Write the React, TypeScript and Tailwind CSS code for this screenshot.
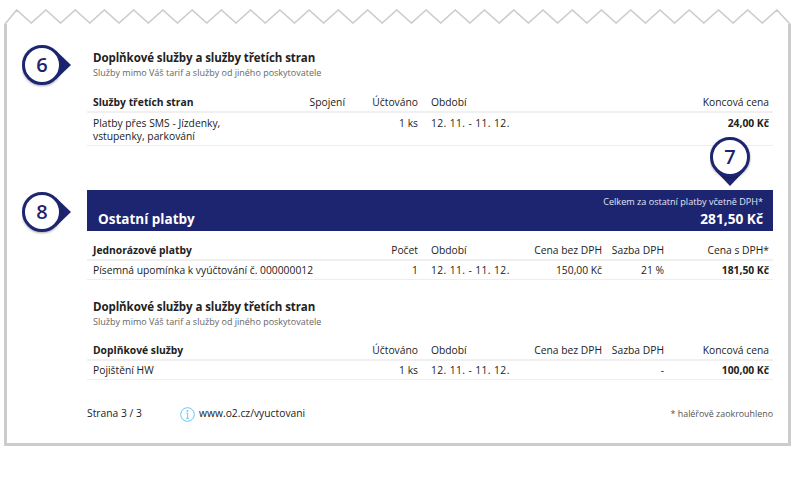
const rowGrid = 'grid grid-cols-[200px_52px_73px_102px_82px_62px_105px] pl-[6px] pr-[4px]';

// torn paper edge: peaks every ~29px
const zigzag = () => {
  const step = 29.24;
  let d = 'M1 15';
  for (let k = 0; k < 27; k++) {
    const peak = 12.7 + k * step;
    d += ` L${peak.toFixed(1)} 1`;
    if (k < 26) d += ` L${(peak + step / 2).toFixed(1)} 14`;
  }
  return d + ' L786 15';
};

const Badge = ({ n, dir, className }: { n: string; dir: 'right' | 'down'; className: string }) => (
  <div className={`absolute ${className}`}>
    <svg width="56" height="56" viewBox="0 0 56 56" className="block">
      <defs>
        <filter id={`shadow${n}`} x="-20%" y="-20%" width="140%" height="140%">
          <feDropShadow dx="0" dy="1" stdDeviation="0.8" floodColor="#000" floodOpacity="0.35" />
        </filter>
      </defs>
      {dir === 'right' ? (
        <path d="M33.8 5.5 L49 20 L33.8 34.5 Z" fill="#1d2570" />
      ) : (
        <path d="M5.5 33.8 L20 49 L34.5 33.8 Z" fill="#1d2570" />
      )}
      <circle cx="20" cy="20" r="18.5" fill="#fff" stroke="#1d2570" strokeWidth="3" filter={`url(#shadow${n})`} />
    </svg>
    <span className="absolute left-0 top-0 flex h-[40px] w-[40px] items-center justify-center text-[20px] font-semibold text-[#1d2570]">
      {n}
    </span>
  </div>
);

const Heading = () => (
  <div className="pl-[6px]">
    <h2 className="text-[11.5px] leading-[16px] font-bold tracking-[-0.08px] text-[#222]">
      Doplňkové služby a služby třetích stran
    </h2>
    <p className="text-[9px] leading-[13px] text-[#666]">Služby mimo Váš tarif a služby od jiného poskytovatele</p>
  </div>
);

const HeadRow = ({ cells }: { cells: string[] }) => (
  <div className={`${rowGrid} h-[19px] items-center border-b-2 border-[#f0f0f0] text-[10.3px] text-[#222]`}>
    <span className="font-bold whitespace-nowrap">{cells[0]}</span>
    <span className="text-right">{cells[1]}</span>
    <span className="text-right">{cells[2]}</span>
    <span className="pl-[13px]">{cells[3]}</span>
    <span className="text-right whitespace-nowrap">{cells[4]}</span>
    <span className="text-right whitespace-nowrap">{cells[5]}</span>
    <span className="text-right whitespace-nowrap">{cells[6]}</span>
  </div>
);

const App = () => {
  return (
    <main className="h-[488px] w-[794px] bg-white pl-[4px] font-['Open_Sans',sans-serif] text-[#222]">
      <svg width="787" height="15" viewBox="0 0 787 15" className="mt-[9px] block" fill="none" stroke="#cccccc" strokeWidth="1.6">
        <path d={zigzag()} />
      </svg>
      <div className="relative h-[422px] w-[787px] border-x-[3px] border-b-[3px] border-[#cccccc] pt-[26px] pl-[80px]">
        <div className="w-[686px]">
          <div className="relative">
            <Badge n="6" dir="right" className="left-[-65px] top-[-5px]" />
            <Heading />
          </div>

          <div className="mt-[15px]">
            <HeadRow cells={['Služby třetích stran', 'Spojení', 'Účtováno', 'Období', '', '', 'Koncová cena']} />
            <div className={`${rowGrid} h-[33px] items-start border-b border-[#eeeeee] pt-[4px] text-[10.3px] leading-[13px]`}>
              <span className="col-span-1">
                Platby přes SMS - Jízdenky,
                <br />
                vstupenky, parkování
              </span>
              <span />
              <span className="text-right">1 ks</span>
              <span className="pl-[13px] tracking-[0.4px] whitespace-nowrap">12. 11. - 11. 12.</span>
              <span />
              <span />
              <span className="text-right font-bold">24,00 Kč</span>
            </div>
          </div>

          <div className="relative mt-[44px]">
            <Badge n="8" dir="right" className="left-[-65px] top-[2px]" />
            <Badge n="7" dir="down" className="left-[623px] top-[-53px]" />
            <div className="flex h-[41px] items-end justify-between bg-[#1d2570] pr-[10px] pb-[2px] pl-[11px] text-white">
              <h1 className="text-[13.5px] leading-[20px] font-bold">Ostatní platby</h1>
              <div className="text-right">
                <p className="text-[9.1px] leading-[13px] text-[#e4e5f0]">Celkem za ostatní platby včetně DPH*</p>
                <p className="mt-[1px] text-[13.7px] leading-[20px] font-bold">281,50 Kč</p>
              </div>
            </div>
          </div>

          <div className="mt-[11px]">
            <HeadRow cells={['Jednorázové platby', '', 'Počet', 'Období', 'Cena bez DPH', 'Sazba DPH', 'Cena s DPH*']} />
            <div className={`${rowGrid} h-[19px] items-center border-b border-[#eeeeee] pt-[1px] text-[10.3px]`}>
              <span className="col-span-2 whitespace-nowrap">Písemná upomínka k vyúčtování č. 000000012</span>
              <span className="text-right">1</span>
              <span className="pl-[13px] tracking-[0.4px] whitespace-nowrap">12. 11. - 11. 12.</span>
              <span className="text-right">150,00 Kč</span>
              <span className="text-right">21 %</span>
              <span className="text-right font-bold">181,50 Kč</span>
            </div>
          </div>

          <div className="mt-[19px]">
            <Heading />
          </div>

          <div className="mt-[14px]">
            <HeadRow cells={['Doplňkové služby', '', 'Účtováno', 'Období', 'Cena bez DPH', 'Sazba DPH', 'Koncová cena']} />
            <div className={`${rowGrid} h-[19px] items-center border-b border-[#eeeeee] pt-[1px] text-[10.3px]`}>
              <span className="col-span-2">Pojištění HW</span>
              <span className="text-right">1 ks</span>
              <span className="pl-[13px] tracking-[0.4px] whitespace-nowrap">12. 11. - 11. 12.</span>
              <span />
              <span className="text-right">-</span>
              <span className="text-right font-bold">100,00 Kč</span>
            </div>
          </div>

          <footer className="mt-[25px] flex h-[18px] items-center text-[10.3px]">
            <span className="w-[93px]">Strana 3 / 3</span>
            <svg width="15" height="15" viewBox="0 0 15 15" fill="none" className="mr-[4px] shrink-0">
              <circle cx="7.5" cy="7.5" r="6.8" stroke="#6cc4ec" strokeWidth="1" />
              <circle cx="7.5" cy="4" r="0.9" fill="#6cc4ec" />
              <path d="M6.3 6.2h1.4v5M6.2 11.4h2.6" stroke="#6cc4ec" strokeWidth="1" />
            </svg>
            <span>www.o2.cz/vyuctovani</span>
            <span className="ml-auto text-[8.9px] text-[#555]">* haléřově zaokrouhleno</span>
          </footer>
        </div>
      </div>
    </main>
  );
};

export default App;
